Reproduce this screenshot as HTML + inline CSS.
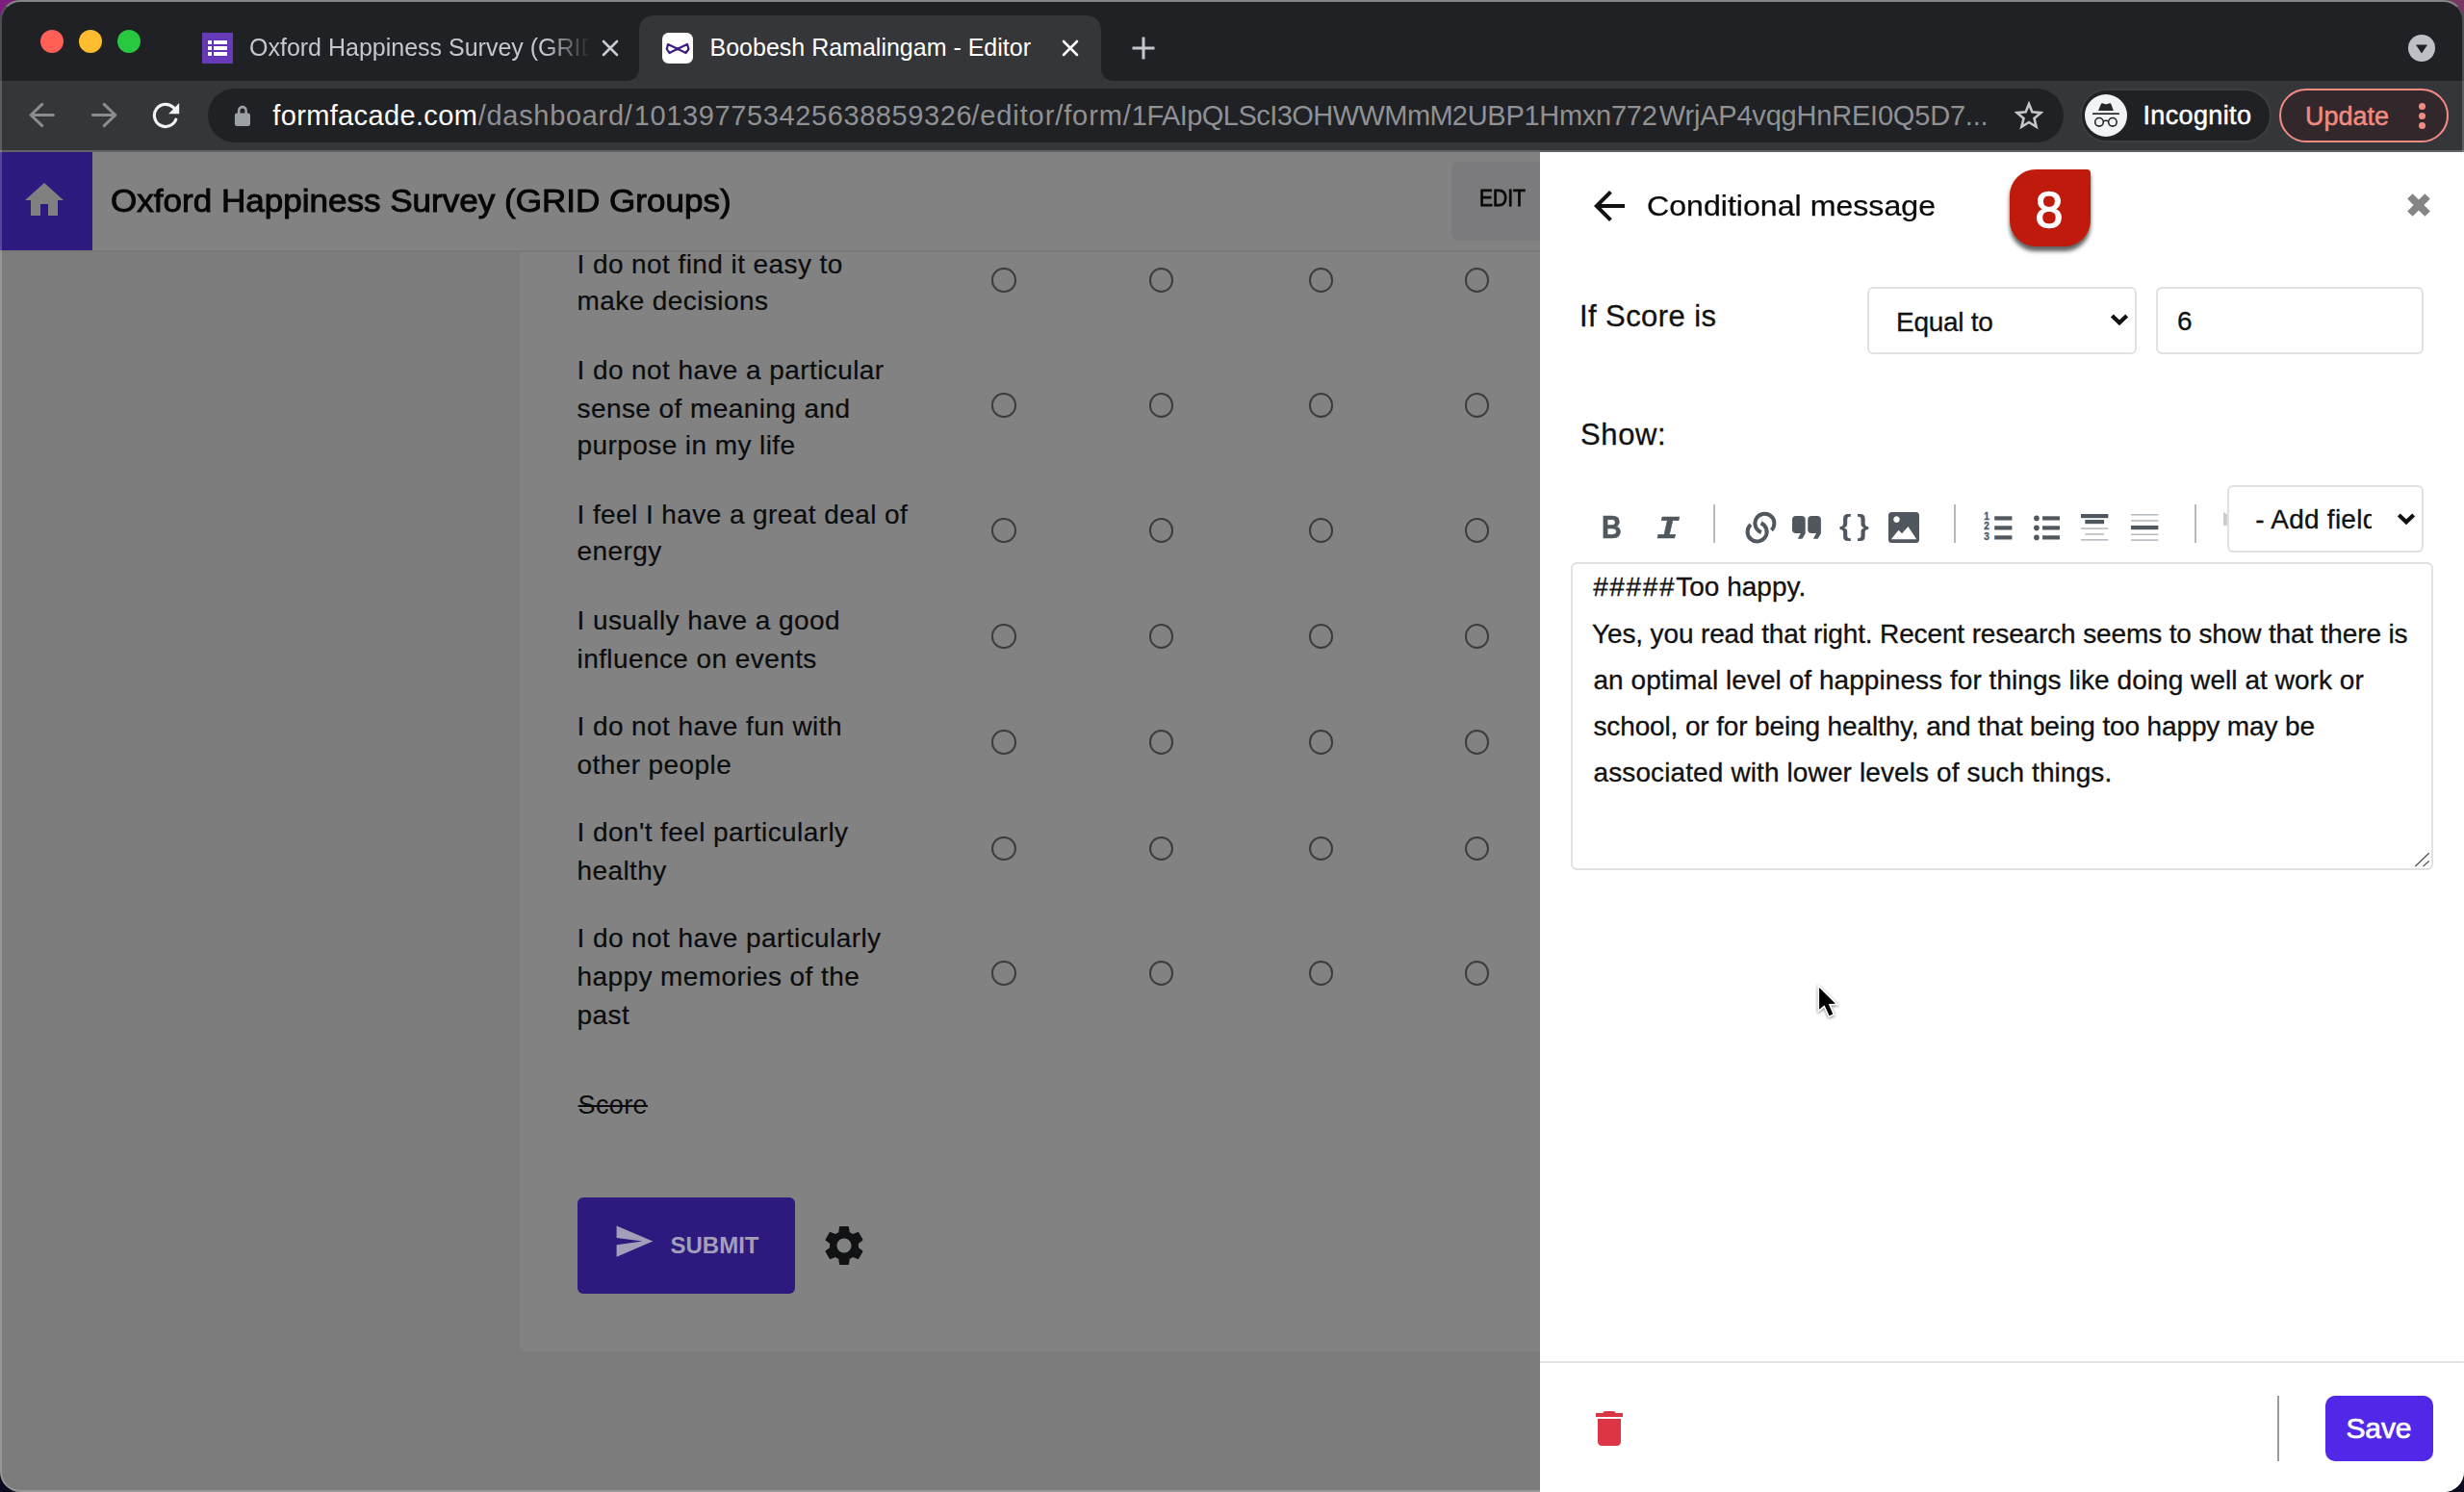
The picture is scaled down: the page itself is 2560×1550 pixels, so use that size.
<!DOCTYPE html>
<html lang="en"><head><meta charset="utf-8"><title>Boobesh Ramalingam - Editor</title>
<style>
html,body{margin:0;padding:0}
body{width:2560px;height:1550px;overflow:hidden;background:#0b0a1f;font-family:"Liberation Sans",sans-serif;position:relative}
.b{position:absolute;box-sizing:border-box;display:block}
.t{position:absolute;white-space:nowrap;margin:0;padding:0}
.win{position:absolute;left:0;top:0;width:2560px;height:1550px;border-radius:21px;overflow:hidden;background:#7c7c7c}
.frame{position:absolute;left:0;top:0;width:2560px;height:1550px;box-sizing:border-box;border-radius:21px;border:2px solid;border-color:rgba(255,255,255,.45) rgba(255,255,255,.2) rgba(255,255,255,.2) rgba(255,255,255,.2);pointer-events:none}
</style></head><body>
<div class="b" style="left:0;top:0;width:60px;height:60px;background:#7c1c7e"></div>
<div class="b" style="left:2500px;top:0;width:60px;height:60px;background:#7a3766"></div>
<div class="win">
<div class="b" style="left:0px;top:0px;width:2560px;height:84px;background:#202124;"></div>
<div class="b" style="left:0px;top:84px;width:2560px;height:72px;background:#35363a;"></div>
<div class="b" style="left:0px;top:156px;width:2560px;height:2px;background:#626366;"></div>
<div class="b" style="left:42px;top:31px;width:24px;height:24px;background:#ff5f57;border-radius:50%"></div>
<div class="b" style="left:82px;top:31px;width:24px;height:24px;background:#febc2e;border-radius:50%"></div>
<div class="b" style="left:122px;top:31px;width:24px;height:24px;background:#28c840;border-radius:50%"></div>
<svg class="b" style="left:210px;top:34px;" width="32" height="32" viewBox="0 0 32 32"><rect width="32" height="32" fill="#673ab7"/><rect x="5.5" y="7.5" width="5" height="5" fill="#5a27b3"/><rect x="11.5" y="7.5" width="15" height="5" fill="#5a27b3"/><rect x="6" y="8" width="4" height="4" fill="#fff"/><rect x="12" y="8" width="14" height="4" fill="#fff"/><rect x="5.5" y="13.5" width="5" height="5" fill="#5a27b3"/><rect x="11.5" y="13.5" width="15" height="5" fill="#5a27b3"/><rect x="6" y="14" width="4" height="4" fill="#fff"/><rect x="12" y="14" width="14" height="4" fill="#fff"/><rect x="5.5" y="19.5" width="5" height="5" fill="#5a27b3"/><rect x="11.5" y="19.5" width="15" height="5" fill="#5a27b3"/><rect x="6" y="20" width="4" height="4" fill="#fff"/><rect x="12" y="20" width="14" height="4" fill="#fff"/></svg>
<div class="t" style="left:259px;top:34.20px;font-size:25px;line-height:30.0px;color:#c4c7cc;width:354px;overflow:hidden;-webkit-mask-image:linear-gradient(90deg,#000 87%,transparent 100%);mask-image:linear-gradient(90deg,#000 87%,transparent 100%);">Oxford Happiness Survey (GRID</div>
<svg class="b" style="left:622px;top:38px;" width="24" height="24" viewBox="0 0 24 24"><path d="M5 5 19 19M19 5 5 19" stroke="#c9cbd0" stroke-width="2.600" fill="none" stroke-linecap="round"/></svg>
<svg class="b" style="left:648px;top:16px;" width="512" height="68" viewBox="0 0 512 68"><path d="M3 68 C11 68 16 63 16 55 L16 16 C16 6 22 0 32 0 L480 0 C490 0 496 6 496 16 L496 55 C496 63 501 68 509 68 Z" fill="#35363a"/></svg>
<svg class="b" style="left:688px;top:34px;" width="32" height="32" viewBox="0 0 32 32"><rect width="32" height="32" rx="6.5" fill="#fff"/><path d="M6 12 L16 16.8 L26 12 L27.5 17 L24.5 21 L16 16.8 L7.5 21 L4.8 17 Z" fill="none" stroke="#3d1d7c" stroke-width="2.2" stroke-linejoin="round"/><circle cx="16" cy="16.8" r="1.6" fill="#3d1d7c"/></svg>
<div class="t" style="left:737.5px;top:34.20px;font-size:25px;line-height:30.0px;color:#fff;">Boobesh Ramalingam - Editor</div>
<svg class="b" style="left:1100px;top:38px;" width="24" height="24" viewBox="0 0 24 24"><path d="M5 5 19 19M19 5 5 19" stroke="#fff" stroke-width="2.600" fill="none" stroke-linecap="round"/></svg>
<svg class="b" style="left:1176px;top:38px;" width="24" height="24" viewBox="0 0 24 24"><path d="M12 0.5V23.5M0.5 12H23.5" stroke="#c4c7cc" stroke-width="3" fill="none"/></svg>
<svg class="b" style="left:2502px;top:36px;" width="28" height="28" viewBox="0 0 28 28"><circle cx="14" cy="14" r="14" fill="#bdc1c6"/><path d="M8 10.5H20L14 19.5Z" fill="#202124"/></svg>
<svg class="b" style="left:30px;top:106px;" width="28" height="28" viewBox="0 0 28 28"><path d="M25.400 13.500H2.600M13.700 2.400 2.100 13.500 13.700 24.600" stroke="#8a8c90" stroke-width="3" fill="none" stroke-linecap="round" stroke-linejoin="round"/></svg>
<svg class="b" style="left:94px;top:106px;" width="28" height="28" viewBox="0 0 28 28"><path d="M2.400 13.500H25.300M14.200 2.400 25.800 13.500 14.200 24.600" stroke="#8a8c90" stroke-width="3" fill="none" stroke-linecap="round" stroke-linejoin="round"/></svg>
<svg class="b" style="left:158px;top:105px;" width="30" height="30" viewBox="0 0 30 30"><path d="M22.200 6.700A11.600 11.600 0 1 0 24.760 19.250" stroke="#f1f3f4" stroke-width="3.200" fill="none" stroke-linecap="round"/><path d="M28.200 1.900V13.300H17.100Z" fill="#f1f3f4"/></svg>
<div class="b" style="left:216px;top:92px;width:1928px;height:56px;background:#202124;border-radius:28px"></div>
<svg class="b" style="left:243px;top:109px;" width="18" height="24" viewBox="0 0 18 24"><rect x="0.900" y="8.600" width="16.100" height="13.400" rx="2.200" fill="#9aa0a6"/><path d="M5.200 9.500V5.800a3.700 3.700 0 0 1 7.400 0V9.500" stroke="#9aa0a6" stroke-width="2.600" fill="none"/></svg>
<div class="t" style="left:283.3px;top:102.60px;font-size:29px;line-height:34.8px;color:#8f9194;"><span style="display:inline-block;width:213.50px;letter-spacing:0.353px;color:#fff;">formfacade.com</span><span style="display:inline-block;width:162.00px;letter-spacing:0.683px;color:#8f9194;">/dashboard/</span><span style="display:inline-block;width:350.50px;letter-spacing:0.61px;color:#8f9194;">101397753425638859326</span><span style="display:inline-block;width:166.50px;letter-spacing:0.899px;color:#8f9194;">/editor/form/</span><span style="display:inline-block;width:333.00px;letter-spacing:-0.55px;color:#8f9194;">1FAIpQLScI3OHWWMmM</span><span style="display:inline-block;width:215.00px;letter-spacing:-0.273px;color:#8f9194;">2UBP1Hmxn772</span><span style="display:inline-block;letter-spacing:-0.2px;color:#8f9194;">WrjAP4vqgHnREI0Q5D7...</span></div>
<svg class="b" style="left:2092.8px;top:104.7px;" width="30" height="30" viewBox="0 0 24 24"><path d="M12 2.400 14.700 9.100 21.900 9.700 16.400 14.400 18.100 21.400 12 17.600 5.900 21.400 7.600 14.400 2.100 9.700 9.300 9.100Z" stroke="#c4c7c5" stroke-width="2.100" fill="none" stroke-linejoin="miter"/></svg>
<div class="b" style="left:2160.5px;top:92px;width:199px;height:56px;background:#202124;border-radius:28px;border:2px solid #3c3d41"></div>
<svg class="b" style="left:2166px;top:98px;" width="44" height="44" viewBox="0 0 44 44"><circle cx="22" cy="22" r="22" fill="#f1f3f4"/><path d="M14 17 16.900 9.900Q17.300 9 18.300 9.200L20.800 10Q22.100 10.400 23.400 10L25.900 9.200Q26.900 9 27.300 9.900L29.900 17Z" fill="#26272b"/><rect x="8" y="19.300" width="27.900" height="1.700" fill="#26272b"/><circle cx="15" cy="28.800" r="4.300" fill="none" stroke="#26272b" stroke-width="1.600"/><circle cx="28.900" cy="28.800" r="4.300" fill="none" stroke="#26272b" stroke-width="1.600"/><path d="M19.200 27.900c1.800-.700 3.700-.700 5.500 0" stroke="#26272b" stroke-width="1.500" fill="none"/></svg>
<div class="t" style="left:2226.5px;top:104.40px;font-size:27px;line-height:32.4px;color:#fff;letter-spacing:0.36px;-webkit-text-stroke:0.5px #fff;">Incognito</div>
<div class="b" style="left:2368px;top:92px;width:176px;height:56px;background:#32282b;border-radius:28px;border:2px solid #f28b82"></div>
<div class="t" style="left:2395px;top:104.80px;font-size:27px;line-height:32.4px;color:#f28b82;-webkit-text-stroke:0.5px #f28b82;">Update</div>
<div class="b" style="left:2512.5px;top:106.5px;width:7px;height:7px;background:#f28b82;border-radius:50%"></div>
<div class="b" style="left:2512.5px;top:116.5px;width:7px;height:7px;background:#f28b82;border-radius:50%"></div>
<div class="b" style="left:2512.5px;top:126.5px;width:7px;height:7px;background:#f28b82;border-radius:50%"></div>
<div class="b" style="left:0px;top:158px;width:1600px;height:102px;background:#828282;"></div>
<div class="b" style="left:0px;top:260px;width:1600px;height:2px;background:#787878;"></div>
<div class="b" style="left:540px;top:262px;width:1100px;height:1141.5px;background:#828282;border-radius:0 0 0 7px"></div>
<div class="b" style="left:0px;top:158px;width:96px;height:102px;background:#2e1a7e;"></div>
<svg class="b" style="left:22.1px;top:184px;" width="48" height="48" viewBox="0 0 24 24"><path d="M10 20v-6h4v6h5v-8h3L12 3 2 12h3v8z" fill="#808080"/></svg>
<div class="t" style="left:115px;top:188.70px;font-size:33.5px;line-height:40.2px;color:#060606;transform:scaleX(1.046);transform-origin:0 0;-webkit-text-stroke:0.95px #060606;">Oxford Happiness Survey (GRID Groups)</div>
<div class="b" style="left:1508px;top:168px;width:120px;height:82px;background:#7b7b7d;border-radius:8px"></div>
<div class="t" style="left:1536.9px;top:191.50px;font-size:24px;line-height:28.8px;color:#060606;transform:scaleX(0.875);transform-origin:0 0;-webkit-text-stroke:0.8px #060606;">EDIT</div>
<div class="t" style="left:599.5px;top:257.75px;font-size:28px;line-height:33.6px;color:#0b0c0e;-webkit-text-stroke:0.2px #0b0c0e;"><span style="display:block;height:33.6px;margin-bottom:4.40px;letter-spacing:0.42px;">I do not find it easy to</span><span style="display:block;height:33.6px;letter-spacing:0.42px;">make decisions</span></div>
<div class="b" style="left:1030.0px;top:278.4px;width:25.6px;height:25.6px;border-radius:50%;border:2px solid #3c3c3c"></div>
<div class="b" style="left:1193.8px;top:278.4px;width:25.6px;height:25.6px;border-radius:50%;border:2px solid #3c3c3c"></div>
<div class="b" style="left:1359.9px;top:278.4px;width:25.6px;height:25.6px;border-radius:50%;border:2px solid #3c3c3c"></div>
<div class="b" style="left:1521.9px;top:278.4px;width:25.6px;height:25.6px;border-radius:50%;border:2px solid #3c3c3c"></div>
<div class="t" style="left:599.5px;top:368.15px;font-size:28px;line-height:33.6px;color:#0b0c0e;-webkit-text-stroke:0.2px #0b0c0e;"><span style="display:block;height:33.6px;margin-bottom:6.00px;letter-spacing:0.42px;">I do not have a particular</span><span style="display:block;height:33.6px;margin-bottom:4.60px;letter-spacing:0.42px;">sense of meaning and</span><span style="display:block;height:33.6px;letter-spacing:0.42px;">purpose in my life</span></div>
<div class="b" style="left:1030.0px;top:408.2px;width:25.6px;height:25.6px;border-radius:50%;border:2px solid #3c3c3c"></div>
<div class="b" style="left:1193.8px;top:408.2px;width:25.6px;height:25.6px;border-radius:50%;border:2px solid #3c3c3c"></div>
<div class="b" style="left:1359.9px;top:408.2px;width:25.6px;height:25.6px;border-radius:50%;border:2px solid #3c3c3c"></div>
<div class="b" style="left:1521.9px;top:408.2px;width:25.6px;height:25.6px;border-radius:50%;border:2px solid #3c3c3c"></div>
<div class="t" style="left:599.5px;top:518.15px;font-size:28px;line-height:33.6px;color:#0b0c0e;-webkit-text-stroke:0.2px #0b0c0e;"><span style="display:block;height:33.6px;margin-bottom:4.20px;letter-spacing:0.42px;">I feel I have a great deal of</span><span style="display:block;height:33.6px;letter-spacing:0.42px;">energy</span></div>
<div class="b" style="left:1030.0px;top:538.0px;width:25.6px;height:25.6px;border-radius:50%;border:2px solid #3c3c3c"></div>
<div class="b" style="left:1193.8px;top:538.0px;width:25.6px;height:25.6px;border-radius:50%;border:2px solid #3c3c3c"></div>
<div class="b" style="left:1359.9px;top:538.0px;width:25.6px;height:25.6px;border-radius:50%;border:2px solid #3c3c3c"></div>
<div class="b" style="left:1521.9px;top:538.0px;width:25.6px;height:25.6px;border-radius:50%;border:2px solid #3c3c3c"></div>
<div class="t" style="left:599.5px;top:628.15px;font-size:28px;line-height:33.6px;color:#0b0c0e;-webkit-text-stroke:0.2px #0b0c0e;"><span style="display:block;height:33.6px;margin-bottom:6.00px;letter-spacing:0.42px;">I usually have a good</span><span style="display:block;height:33.6px;letter-spacing:0.42px;">influence on events</span></div>
<div class="b" style="left:1030.0px;top:648.2px;width:25.6px;height:25.6px;border-radius:50%;border:2px solid #3c3c3c"></div>
<div class="b" style="left:1193.8px;top:648.2px;width:25.6px;height:25.6px;border-radius:50%;border:2px solid #3c3c3c"></div>
<div class="b" style="left:1359.9px;top:648.2px;width:25.6px;height:25.6px;border-radius:50%;border:2px solid #3c3c3c"></div>
<div class="b" style="left:1521.9px;top:648.2px;width:25.6px;height:25.6px;border-radius:50%;border:2px solid #3c3c3c"></div>
<div class="t" style="left:599.5px;top:738.15px;font-size:28px;line-height:33.6px;color:#0b0c0e;-webkit-text-stroke:0.2px #0b0c0e;"><span style="display:block;height:33.6px;margin-bottom:6.00px;letter-spacing:0.42px;">I do not have fun with</span><span style="display:block;height:33.6px;letter-spacing:0.42px;">other people</span></div>
<div class="b" style="left:1030.0px;top:758.3000000000001px;width:25.6px;height:25.6px;border-radius:50%;border:2px solid #3c3c3c"></div>
<div class="b" style="left:1193.8px;top:758.3000000000001px;width:25.6px;height:25.6px;border-radius:50%;border:2px solid #3c3c3c"></div>
<div class="b" style="left:1359.9px;top:758.3000000000001px;width:25.6px;height:25.6px;border-radius:50%;border:2px solid #3c3c3c"></div>
<div class="b" style="left:1521.9px;top:758.3000000000001px;width:25.6px;height:25.6px;border-radius:50%;border:2px solid #3c3c3c"></div>
<div class="t" style="left:599.5px;top:848.15px;font-size:28px;line-height:33.6px;color:#0b0c0e;-webkit-text-stroke:0.2px #0b0c0e;"><span style="display:block;height:33.6px;margin-bottom:6.00px;letter-spacing:0.42px;">I don't feel particularly</span><span style="display:block;height:33.6px;letter-spacing:0.42px;">healthy</span></div>
<div class="b" style="left:1030.0px;top:868.5px;width:25.6px;height:25.6px;border-radius:50%;border:2px solid #3c3c3c"></div>
<div class="b" style="left:1193.8px;top:868.5px;width:25.6px;height:25.6px;border-radius:50%;border:2px solid #3c3c3c"></div>
<div class="b" style="left:1359.9px;top:868.5px;width:25.6px;height:25.6px;border-radius:50%;border:2px solid #3c3c3c"></div>
<div class="b" style="left:1521.9px;top:868.5px;width:25.6px;height:25.6px;border-radius:50%;border:2px solid #3c3c3c"></div>
<div class="t" style="left:599.5px;top:958.15px;font-size:28px;line-height:33.6px;color:#0b0c0e;-webkit-text-stroke:0.2px #0b0c0e;"><span style="display:block;height:33.6px;margin-bottom:6.20px;letter-spacing:0.42px;">I do not have particularly</span><span style="display:block;height:33.6px;margin-bottom:6.20px;letter-spacing:0.42px;">happy memories of the</span><span style="display:block;height:33.6px;letter-spacing:0.42px;">past</span></div>
<div class="b" style="left:1030.0px;top:998.3000000000001px;width:25.6px;height:25.6px;border-radius:50%;border:2px solid #3c3c3c"></div>
<div class="b" style="left:1193.8px;top:998.3000000000001px;width:25.6px;height:25.6px;border-radius:50%;border:2px solid #3c3c3c"></div>
<div class="b" style="left:1359.9px;top:998.3000000000001px;width:25.6px;height:25.6px;border-radius:50%;border:2px solid #3c3c3c"></div>
<div class="b" style="left:1521.9px;top:998.3000000000001px;width:25.6px;height:25.6px;border-radius:50%;border:2px solid #3c3c3c"></div>
<div class="t" style="left:600.6px;top:1132.30px;font-size:27px;line-height:32.4px;color:#0b0c0e;letter-spacing:0.37px;text-decoration:line-through;text-decoration-thickness:2px;">Score</div>
<div class="b" style="left:600px;top:1244px;width:226px;height:100px;background:#2e1a7e;border-radius:6px"></div>
<svg class="b" style="left:637.4px;top:1268.4px;" width="43.1" height="43.1" viewBox="0 0 24 24"><path d="M2.010 21L23 12 2.010 3 2 10l15 2-15 2z" fill="#a39fb9"/></svg>
<div class="t" style="left:696.5px;top:1279.70px;font-size:24px;line-height:28.8px;color:#a39fb9;font-weight:700;">SUBMIT</div>
<svg class="b" style="left:852.3px;top:1268.8px;" width="50" height="50" viewBox="0 0 24 24"><path d="M19.14 12.94c.04-.3.06-.61.06-.94 0-.32-.02-.64-.07-.94l2.03-1.58c.18-.14.23-.41.12-.61l-1.92-3.32c-.12-.22-.37-.29-.59-.22l-2.39.96c-.5-.38-1.03-.7-1.62-.94l-.36-2.54c-.04-.24-.24-.41-.48-.41h-3.84c-.24 0-.43.17-.47.41l-.36 2.54c-.59.24-1.13.57-1.62.94l-2.39-.96c-.22-.08-.47 0-.59.22L2.74 8.87c-.12.21-.08.47.12.61l2.03 1.58c-.05.3-.09.63-.09.94s.02.64.07.94l-2.03 1.58c-.18.14-.23.41-.12.61l1.92 3.32c.12.22.37.29.59.22l2.39-.96c.5.38 1.03.7 1.62.94l.36 2.54c.05.24.24.41.48.41h3.84c.24 0 .44-.17.47-.41l.36-2.54c.59-.24 1.13-.56 1.62-.94l2.39.96c.22.08.47 0 .59-.22l1.92-3.32c.12-.22.07-.47-.12-.61l-2.01-1.58zM12 15.6c-1.98 0-3.6-1.62-3.6-3.6s1.62-3.6 3.6-3.6 3.6 1.62 3.6 3.6-1.62 3.6-3.6 3.6z" fill="#111214"/></svg>
<div class="b" style="left:1600px;top:158px;width:960px;height:1392px;background:#fff;"></div>
<svg class="b" style="left:1648px;top:190px;" width="48" height="48" viewBox="0 0 24 24"><path d="M20 11H7.83l5.59-5.59L12 4l-8 8 8 8 1.41-1.41L7.83 13H20v-2z" fill="#111"/></svg>
<div class="t" style="left:1710.8px;top:196.10px;font-size:29.5px;line-height:35.4px;color:#0a0a0a;transform:scaleX(1.089);transform-origin:0 0;-webkit-text-stroke:0.25px #0a0a0a;">Conditional message</div>
<div class="b" style="left:2088px;top:176px;width:84px;height:80px;background:#bf1a0c;border-radius:27px 4px 27px 27px;box-shadow:0 4.5px 4.5px rgba(0,0,0,.62)"></div>
<div class="t" style="left:2114.6px;top:187.40px;font-size:52px;line-height:62.4px;color:#fff;-webkit-text-stroke:1.3px #fff;">8</div>
<svg class="b" style="left:2498px;top:197.5px;" width="30" height="30" viewBox="0 0 30 30"><path d="M3.2 8.6 8.6 3.2 15 9.6 21.4 3.2 26.8 8.6 20.4 15 26.8 21.4 21.4 26.8 15 20.4 8.6 26.8 3.2 21.4 9.6 15Z" fill="#858585"/></svg>
<div class="t" style="left:1640.9px;top:309.90px;font-size:31px;line-height:37.2px;color:#111;letter-spacing:0.44px;-webkit-text-stroke:0.3px #111;">If Score is</div>
<div class="b" style="left:1940px;top:298px;width:280px;height:70px;background:#fff;border:2px solid #e1e1e1;border-radius:6px"></div>
<div class="t" style="left:1970px;top:317.70px;font-size:28px;line-height:33.6px;color:#111;letter-spacing:-0.29px;-webkit-text-stroke:0.3px #111;">Equal to</div>
<svg class="b" style="left:2191.85px;top:325.2px;" width="20" height="14" viewBox="0 0 20 14"><path d="M2.350 3 10 10.300 17.650 3" stroke="#111" stroke-width="4.200" fill="none"/></svg>
<div class="b" style="left:2240px;top:298px;width:278px;height:70px;background:#fff;border:2px solid #e1e1e1;border-radius:6px"></div>
<div class="t" style="left:2262px;top:317.20px;font-size:28px;line-height:33.6px;color:#111;-webkit-text-stroke:0.3px #111;">6</div>
<div class="t" style="left:1641.9px;top:433.10px;font-size:31px;line-height:37.2px;color:#111;letter-spacing:0.66px;-webkit-text-stroke:0.3px #111;">Show:</div>
<div class="t" style="left:1664px;top:528.40px;font-size:33px;line-height:39.6px;color:#50575e;font-weight:700;transform:scaleX(0.87);transform-origin:0 0;-webkit-text-stroke:0.6px #50575e;">B</div>
<div class="t" style="left:1721.2px;top:530.90px;font-size:33px;line-height:39.6px;color:#50575e;font-weight:700;font-family:'Liberation Mono',monospace;font-style:italic;-webkit-text-stroke:0.5px #50575e;transform:scaleX(1.2);transform-origin:0 0;">I</div>
<div class="b" style="left:1780.2px;top:524px;width:1.6px;height:40px;background:#b9b9b9;"></div>
<div class="b" style="left:2030.2px;top:524px;width:1.6px;height:40px;background:#b9b9b9;"></div>
<div class="b" style="left:2280.2px;top:524px;width:1.6px;height:40px;background:#b9b9b9;"></div>
<svg class="b" style="left:1810px;top:528px;" width="40" height="40" viewBox="0 0 40 40"><g fill="none" stroke="#50575e" stroke-width="4" stroke-linecap="butt"><path d="M19.85 25.05A10 10 0 1 1 30.47 22.77"/><path d="M19.6 15.34A10 10 0 1 1 8.970 17.010"/></g></svg>
<svg class="b" style="left:1862px;top:536px;" width="30" height="24" viewBox="0 0 30 24"><g fill="#50575e"><path d="M0 4a4 4 0 0 1 4-4h5.700a4 4 0 0 1 4 4v14.300L10.400 23.800H5.800L8.800 18H4a4 4 0 0 1-4-4Z"/><g transform="translate(16.200 0)"><path d="M0 4a4 4 0 0 1 4-4h5.700a4 4 0 0 1 4 4v14.300L10.400 23.800H5.800L8.800 18H4a4 4 0 0 1-4-4Z"/></g></g></svg>
<div class="t" style="left:1911.3px;top:528.10px;font-size:30px;line-height:36.0px;color:#50575e;font-weight:700;letter-spacing:5.3px;transform:scaleX(1.07);transform-origin:0 0;">{}</div>
<svg class="b" style="left:1962.3px;top:531.9px;" width="32" height="32" viewBox="0 0 32 32"><path fill-rule="evenodd" fill="#50575e" d="M3.5 0h25A3.5 3.5 0 0 1 32 3.5v25a3.5 3.5 0 0 1-3.5 3.5h-25A3.5 3.5 0 0 1 0 28.500v-25A3.5 3.500 0 0 1 3.500 0ZM2.8 28.200h26.400L20.500 15 14 22.300 10.500 18.800ZM8.500 4.300a3.300 3.300 0 1 0 .01 0Z"/></svg>
<svg class="b" style="left:2061.7px;top:533.6px;" width="29" height="29" viewBox="0 0 29 29"><g fill="#50575e"><rect x="10.2" y="2.299999999999977" width="18.2" height="4.2"/><rect x="10.2" y="12.299999999999978" width="18.2" height="4.2"/><rect x="10.2" y="22.299999999999976" width="18.2" height="4.2"/></g></svg>
<div class="t" style="left:2061.3px;top:531.30px;font-size:10px;line-height:12.0px;color:#50575e;font-weight:700;-webkit-text-stroke:0.3px #50575e;">1</div>
<div class="t" style="left:2061.3px;top:541.30px;font-size:10px;line-height:12.0px;color:#50575e;font-weight:700;-webkit-text-stroke:0.3px #50575e;">2</div>
<div class="t" style="left:2061.3px;top:552.30px;font-size:10px;line-height:12.0px;color:#50575e;font-weight:700;-webkit-text-stroke:0.3px #50575e;">3</div>
<svg class="b" style="left:2113px;top:533.6px;" width="28" height="29" viewBox="0 0 28 29"><g fill="#50575e"><circle cx="2.9" cy="4.399999999999977" r="2.8"/><rect x="9" y="2.299999999999977" width="18" height="4.2"/><circle cx="2.9" cy="14.399999999999977" r="2.8"/><rect x="9" y="12.299999999999978" width="18" height="4.2"/><circle cx="2.9" cy="24.399999999999977" r="2.8"/><rect x="9" y="22.299999999999976" width="18" height="4.2"/></g></svg>
<svg class="b" style="left:2161.8px;top:534px;" width="29" height="29" viewBox="0 0 29 29"><rect x="0" y="0" width="28.400" height="4.200" fill="#50575e"/><rect x="4.300" y="6" width="19.800" height="4.200" fill="#50575e"/><rect x="0" y="14.300" width="28.400" height="1.500" fill="#b4b9bd"/><rect x="4.300" y="20.200" width="19.800" height="1.500" fill="#b4b9bd"/><rect x="0" y="26.100" width="28.400" height="1.500" fill="#b4b9bd"/></svg>
<svg class="b" style="left:2214px;top:533.8px;" width="29" height="29" viewBox="0 0 29 29"><rect x="0" y="0" width="28.400" height="1.500" fill="#b4b9bd"/><rect x="0" y="6.200" width="28.400" height="1.500" fill="#b4b9bd"/><rect x="0" y="12" width="28.400" height="4.200" fill="#50575e"/><rect x="0" y="20.500" width="28.400" height="1.500" fill="#b4b9bd"/><rect x="0" y="26.300" width="28.400" height="1.500" fill="#b4b9bd"/></svg>
<svg class="b" style="left:2309.5px;top:532px;" width="7" height="14" viewBox="0 0 7 14"><path d="M0 0 7 4V14H0Z" fill="#c9cdd2"/></svg>
<div class="b" style="left:2314px;top:504px;width:204px;height:70px;background:#fff;border:2px solid #e1e1e1;border-radius:6px"></div>
<div class="t" style="left:2343.2px;top:523.20px;font-size:28px;line-height:33.6px;color:#111;letter-spacing:0.25px;width:121px;overflow:hidden;-webkit-text-stroke:0.3px #111;">- Add field</div>
<svg class="b" style="left:2490px;top:531.7px;" width="20" height="14" viewBox="0 0 20 14"><path d="M2.350 3 10 10.300 17.650 3" stroke="#111" stroke-width="4.200" fill="none"/></svg>
<div class="b" style="left:1632px;top:584px;width:896px;height:320px;background:#fff;border:2px solid #e1e1e1;border-radius:6px"></div>
<div class="t" style="left:1655.2px;top:593.40px;font-size:28px;line-height:33.6px;color:#111;-webkit-text-stroke:0.3px #111;"><span style="display:block;height:33.6px;margin-bottom:14.65px;"><span style="display:inline-block;width:86.10px;letter-spacing:1.6px;">#####</span><span style="display:inline-block;">Too happy.</span></span><span style="display:block;height:33.6px;margin-bottom:14.45px;letter-spacing:-0.131px;margin-left:-1.2px;">Yes, you read that right. Recent research seems to show that there is</span><span style="display:block;height:33.6px;margin-bottom:14.45px;letter-spacing:0.052px;margin-left:0.3px;">an optimal level of happiness for things like doing well at work or</span><span style="display:block;height:33.6px;margin-bottom:14.45px;letter-spacing:-0.134px;margin-left:0.3px;">school, or for being healthy, and that being too happy may be</span><span style="display:block;height:33.6px;letter-spacing:0.114px;margin-left:0.3px;">associated with lower levels of such things.</span></div>
<svg class="b" style="left:2508px;top:885px;" width="17" height="17" viewBox="0 0 17 17"><path d="M1.400 15 15.700 1.300M9.500 15 15.700 9.600" stroke="#555" stroke-width="1.300" fill="none"/></svg>
<div class="b" style="left:1600px;top:1414px;width:960px;height:2px;background:#e3e3e3;"></div>
<svg class="b" style="left:1648px;top:1460px;" width="48" height="48" viewBox="0 0 24 24"><path d="M6 19c0 1.1.9 2 2 2h8c1.1 0 2-.9 2-2V7H6v12zM19 4h-3.500l-1-1h-5l-1 1H5v2h14V4z" fill="#dc3545"/></svg>
<div class="b" style="left:2366.2px;top:1450px;width:1.7px;height:67.5px;background:#9a9a9a;"></div>
<div class="b" style="left:2416px;top:1450px;width:112px;height:68px;background:#5128e8;border-radius:10px"></div>
<div class="t" style="left:2437.4px;top:1465.50px;font-size:30px;line-height:36.0px;color:#fff;letter-spacing:-0.1px;-webkit-text-stroke:0.7px #fff;">Save</div>
<svg class="b" style="left:1884px;top:1020px;" width="36" height="46" viewBox="0 0 36 46"><path d="M6.1 6V28.800L11.500 24.200 16.600 35.200 20.300 33.400 15.800 22.900 23 22.700Z" fill="#000" stroke="#fff" stroke-width="3.200" stroke-linejoin="miter" paint-order="stroke" style="filter:drop-shadow(0 1.500px 1.800px rgba(0,0,0,.5))"/></svg>
</div><div class="frame"></div></body></html>
